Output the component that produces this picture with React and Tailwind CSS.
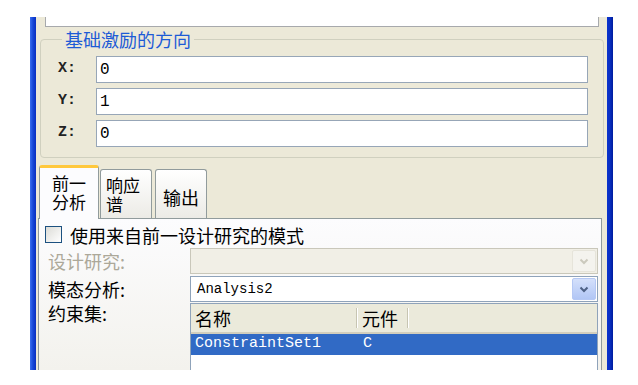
import React from 'react';

const AXES = [
  { label: 'X:', value: '0' },
  { label: 'Y:', value: '1' },
  { label: 'Z:', value: '0' },
];

function Chevron({ disabled }) {
  return (
    <svg width="10" height="7" viewBox="0 0 10 7">
      <path d="M1.5 1.5l3.5 3.5 3.5-3.5" fill="none" stroke={disabled ? '#CBC9BD' : '#4D6185'} strokeWidth="2" />
    </svg>
  );
}

function Combo({ value, disabled }) {
  return (
    <div className={`flex h-[26px] w-[408px] items-center border p-px ${disabled ? 'border-[#C9C7BA] bg-[#F1EFE6]' : 'border-[#8FA3BA] bg-white'}`}>
      <span className="flex-1 pl-[5px] font-['Liberation_Mono',monospace] text-[14px] leading-[20px] text-black">{value}</span>
      <div className={`flex h-full w-[24px] items-center justify-center rounded-[2px] border ${disabled ? 'border-[#E6E4DA] bg-[#F4F3EE]' : 'border-[#B5C8F4] bg-gradient-to-b from-[#D4E0FB] to-[#B1C6F5]'}`}>
        <Chevron disabled={disabled} />
      </div>
    </div>
  );
}

export default function App() {
  return (
    <div className="h-[385px] w-[638px] bg-white pl-[30px] pt-[17px] font-['Noto_Sans_CJK_SC',sans-serif] text-black">
      <div className="flex h-[353px] w-[583px]">
        <div className="w-[6px] bg-gradient-to-r from-[#3A6EF0] via-[#1646D6] to-[#0A2FC0]" />

        <div className="flex w-[571px] flex-col bg-[#ECE9D8]">
          {/* bottom of the box above */}
          <div className="ml-[9px] h-[10px] w-[554px] border-x border-b border-[#A7A9AC] bg-white" />

          {/* group: direction */}
          <fieldset className="ml-[4px] w-[564px] rounded-[4px] border border-[#D0D0BF] pb-[10px] pl-[17px]">
            <legend className="ml-[4px] px-[3px] text-[18px] leading-[24px] text-[#1D5BD6]">基础激励的方向</legend>
            <div className="mt-[5px] flex flex-col gap-[5px]">
              {AXES.map((a) => (
                <div key={a.label} className="flex items-center">
                  <span className="w-[38px] font-['Liberation_Mono',monospace] text-[15px] font-bold text-[#222]">{a.label}</span>
                  <div className="flex h-[27px] w-[492px] items-center border border-[#97A6B7] bg-white pl-[3px] font-['Liberation_Mono',monospace] text-[16px]">
                    {a.value}
                  </div>
                </div>
              ))}
            </div>
          </fieldset>

          {/* tabs */}
          <div className="ml-[3px] mt-[7px] flex h-[53px] items-end">
            <div className="relative z-10 -mb-px flex h-[54px] w-[60px] flex-col items-center rounded-t-[3px] border-x border-t-[3px] border-[#919B9C] border-t-[#FFC83C] bg-[#FCFCFE] pt-[5px] text-[17px] leading-[19px]">
              <span>前一</span>
              <span>分析</span>
            </div>
            <div className="ml-px flex h-[49px] w-[52px] flex-col rounded-t-[3px] border-x border-t border-[#919B9C] bg-gradient-to-b from-white to-[#ECEBE6] pl-[5px] pt-[5px] text-[17px] leading-[19px]">
              <span>响应</span>
              <span>谱</span>
            </div>
            <div className="ml-[3px] flex h-[49px] w-[52px] items-center justify-center rounded-t-[3px] border-x border-t border-[#919B9C] bg-gradient-to-b from-white to-[#ECEBE6] pt-[5px] text-[18px] leading-[20px]">
              输出
            </div>
          </div>

          {/* tab page */}
          <div className="ml-[2px] flex w-[564px] flex-1 flex-col border-x border-t border-[#919B9C] bg-gradient-to-b from-[#FCFCFE] to-[#F3F2ED]">
            <div className="flex h-[29px] items-center pl-[6px] pt-[2px]">
              <div className="h-[17px] w-[17px] border border-[#1C5180] bg-gradient-to-br from-[#DCDCD7] to-white" />
              <span className="ml-[8px] text-[18px] leading-[20px]">使用来自前一设计研究的模式</span>
            </div>

            <div className="flex items-center pl-[9px]">
              <span className="w-[142px] text-[18px] leading-[20px] text-[#ACA899]">设计研究:</span>
              <Combo value="" disabled />
            </div>

            <div className="mt-[2px] flex items-center pl-[9px]">
              <span className="w-[142px] text-[18px] leading-[20px]">模态分析:</span>
              <Combo value="Analysis2" />
            </div>

            <div className="mt-px flex flex-1 pl-[9px]">
              <span className="w-[142px] text-[18px] leading-[20px]">约束集:</span>
              <div className="flex w-[408px] flex-col border-x border-t border-[#8FA3BA] bg-white">
                <div className="flex h-[30px] items-center border-b-2 border-[#D2CEBD] bg-[#EBEADB] text-[18px] leading-[20px]">
                  <span className="w-[165px] pl-[4px]">名称</span>
                  <span className="h-[20px] w-px bg-[#C7C5B2]" />
                  <span className="h-[20px] w-px bg-white" />
                  <span className="w-[49px] pl-[4px]">元件</span>
                  <span className="h-[20px] w-px bg-[#C7C5B2]" />
                  <span className="h-[20px] w-px bg-white" />
                </div>
                <div className="flex h-[21px] items-center bg-[#316AC5] font-['Liberation_Mono',monospace] text-[15px] text-white">
                  <span className="w-[166px] pl-[4px]">ConstraintSet1</span>
                  <span className="pl-[6px]">C</span>
                </div>
              </div>
            </div>
          </div>
        </div>

        <div className="w-[6px] bg-gradient-to-r from-[#0A32CF] via-[#0A2FC0] to-[#001B9E]" />
      </div>
    </div>
  );
}
